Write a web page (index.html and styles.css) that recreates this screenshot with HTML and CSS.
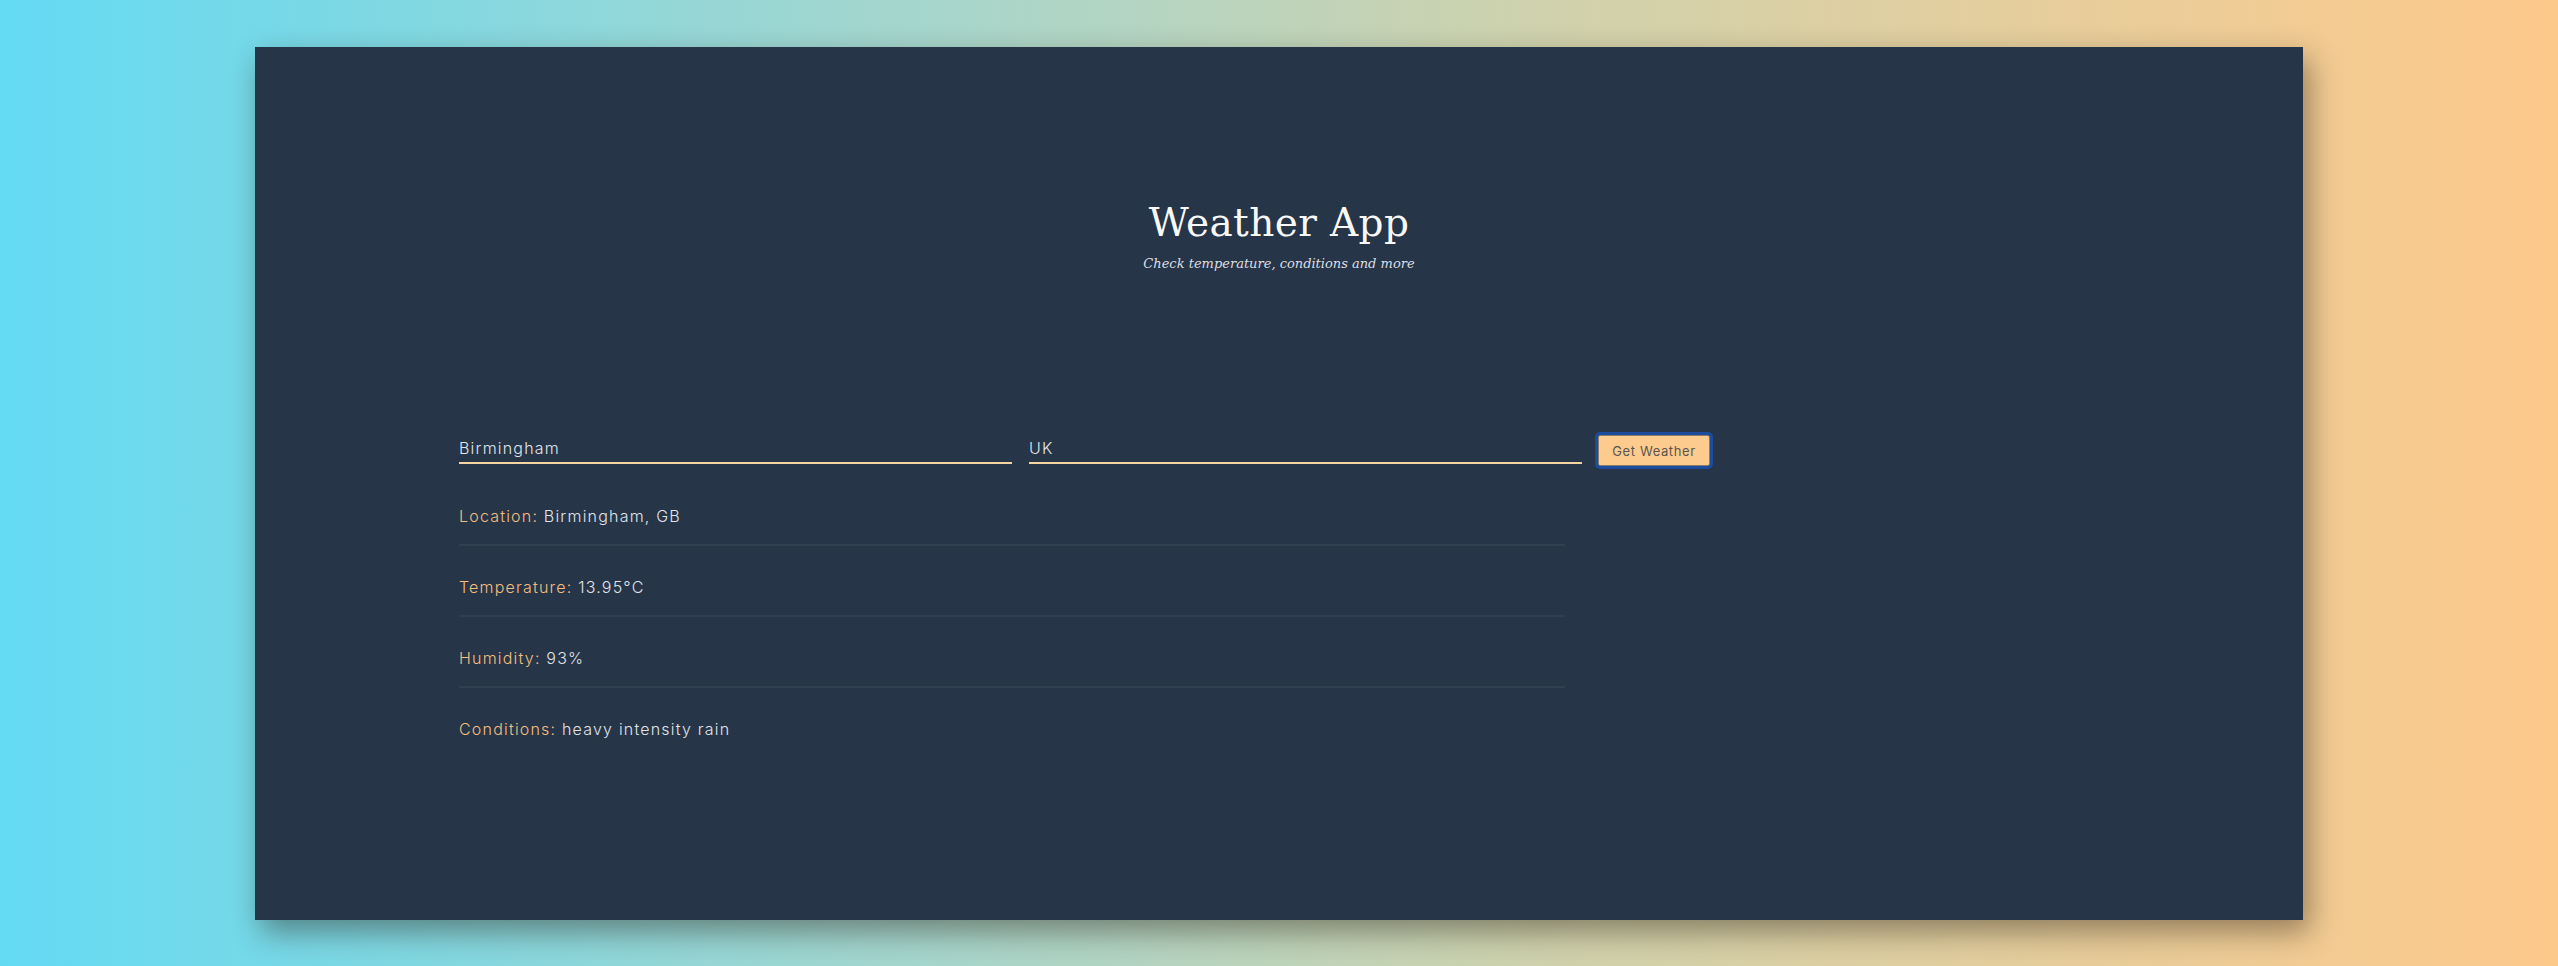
FILE: index.html
```html
<!DOCTYPE html>
<html lang="en">
<head>
<meta charset="utf-8">
<title>Weather App</title>
<link rel="stylesheet" href="styles.css">
</head>
<body>
<main class="card">
  <header class="header">
    <h1 class="title">Weather App</h1>
    <p class="subtitle">Check temperature, conditions and more</p>
  </header>
  <form class="search">
    <input class="field" type="text" value="Birmingham">
    <input class="field" type="text" value="UK">
    <button class="btn" type="button">Get Weather</button>
  </form>
  <section class="results">
    <p class="row"><span class="label">Location:</span> Birmingham, GB</p>
    <p class="row"><span class="label">Temperature:</span> 13.95°C</p>
    <p class="row"><span class="label">Humidity:</span> 93%</p>
    <p class="row"><span class="label">Conditions:</span> heavy intensity rain</p>
  </section>
</main>
</body>
</html>
```
FILE: styles.css
```css
* { box-sizing: border-box; }
html, body { height: 100%; }
body {
  margin: 0;
  background: linear-gradient(to right, #63daf3 0%, #a4d6ce 35%, #cfd2ad 60%, #fdc98b 100%);
  font-family: Inter, "Noto Sans", sans-serif;
  display: flex;
  justify-content: center;
  align-items: flex-start;
  padding-top: 47px;
}
.card {
  width: 2048px;
  height: 873px;
  background: #263547;
  box-shadow: 6px 12px 28px rgba(40, 30, 20, 0.45);
  padding: 151px 204px 0 204px;
}
.header { text-align: center; }
.title {
  margin: 0;
  font-family: "DejaVu Serif", serif;
  font-weight: normal;
  font-size: 39px;
  line-height: 50px;
  color: #f8f8f8;
  letter-spacing: 0.4px;
}
.subtitle {
  margin: 6px 0 0;
  font-family: "DejaVu Serif", serif;
  font-style: italic;
  font-size: 13px;
  line-height: 20px;
  color: #dcdfe4;
}
.search {
  display: flex;
  align-items: flex-start;
  margin-top: 160px;
}
.field {
  width: 553px;
  height: 30px;
  padding: 4px 0 4px 0;
  margin: 0 17px 0 0;
  border: 0;
  border-bottom: 2px solid #f5d4a2;
  background: transparent;
  color: #e2e6eb;
  font-family: Inter, sans-serif;
  font-weight: 300;
  font-size: 16px;
  line-height: 20px;
  letter-spacing: 1.2px;
  outline: none;
}
.field + .field { margin-right: 16px; }
.btn {
  margin-top: 1px;
  width: 112px;
  height: 31px;
  background: #fecb8e;
  border: 1px solid #8a7a66;
  border-radius: 2px;
  color: #5a5650;
  font-family: Inter, sans-serif;
  font-size: 13px;
  letter-spacing: 0.6px;
  outline: 3px solid #1b4c9d;
  outline-offset: 0;
  padding: 0;
}
.results {
  width: 1106px;
  margin-top: 9px;
}
.row {
  margin: 0;
  padding: 29px 0 16px 0;
  font-size: 16px;
  font-weight: 300;
  line-height: 24px;
  color: #e0e4ea;
  letter-spacing: 1.2px;
  border-bottom: 2px solid #323f50;
}
.row:last-child { border-bottom: 0; }
.label { color: #f6be80; }
```
